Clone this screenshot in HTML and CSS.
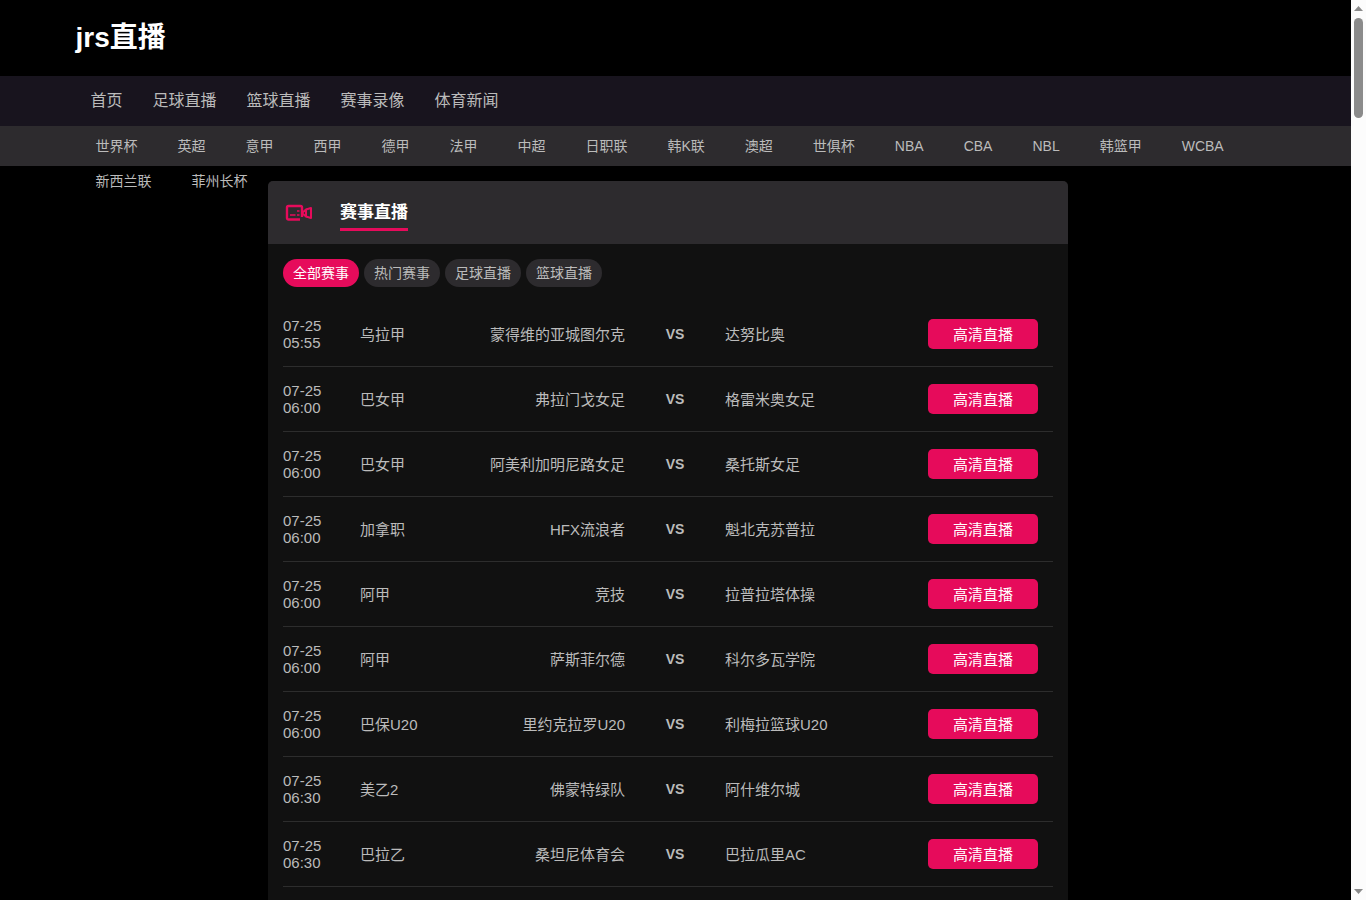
FILE: index.html
```
<!DOCTYPE html>
<html lang="zh-CN">
<head>
    <meta charset="UTF-8">
    <meta name="viewport" content="width=device-width, initial-scale=1.0">
    <title>jrs直播</title>
    <link rel="stylesheet" href="styles.css">
</head>
<body>
    <div class="page">
        <header class="header">
            <div class="container">
                <h1 class="logo">jrs直播</h1>
            </div>
        </header>
        <nav class="nav">
            <div class="container nav-list">
                <a href="#">首页</a>
                <a href="#">足球直播</a>
                <a href="#">篮球直播</a>
                <a href="#">赛事录像</a>
                <a href="#">体育新闻</a>
            </div>
        </nav>
        <nav class="subnav">
            <div class="container subnav-list">
                <a href="#">世界杯</a>
                <a href="#">英超</a>
                <a href="#">意甲</a>
                <a href="#">西甲</a>
                <a href="#">德甲</a>
                <a href="#">法甲</a>
                <a href="#">中超</a>
                <a href="#">日职联</a>
                <a href="#">韩K联</a>
                <a href="#">澳超</a>
                <a href="#">世俱杯</a>
                <a href="#">NBA</a>
                <a href="#">CBA</a>
                <a href="#">NBL</a>
                <a href="#">韩篮甲</a>
                <a href="#">WCBA</a>
                <a href="#">新西兰联</a>
                <a href="#">菲州长杯</a>
            </div>
        </nav>
        <main class="main">
            <section class="live">
                <div class="live-head">
                    <svg class="live-icon" viewBox="0 0 28 18" fill="none" stroke="currentColor" stroke-width="2.4" stroke-linejoin="round">
                        <path d="M15 15.500H3.500A1.500 1.500 0 0 1 2 14V3.500A1.500 1.500 0 0 1 3.500 2H15.500A1.500 1.500 0 0 1 17 3.500V13"/>
                        <path d="M17 9L21 5.500V12.500Z" stroke-width="2"/>
                        <path d="M21 5.500L26 4V14L21 12.500" stroke-width="2"/>
                        <path d="M5 11H10.500M12 11H14.500M12 7H14.500" stroke-width="1.600"/>
                    </svg>
                    <h2 class="live-title">赛事直播</h2>
                </div>
                <div class="tabs">
                    <button type="button" class="tab active">全部赛事</button>
                    <button type="button" class="tab">热门赛事</button>
                    <button type="button" class="tab">足球直播</button>
                    <button type="button" class="tab">篮球直播</button>
                </div>
                <table class="matches">
                    <colgroup>
                        <col class="col-time">
                        <col class="col-league">
                        <col>
                        <col class="col-vs">
                        <col>
                        <col class="col-link">
                    </colgroup>
                    <tbody>
                        <tr>
                            <td>07-25<br>05:55</td>
                            <td>乌拉甲</td>
                            <td class="home">蒙得维的亚城图尔克</td>
                            <td class="vs">VS</td>
                            <td>达努比奥</td>
                            <td><a class="watch" href="#">高清直播</a></td>
                        </tr>
                        <tr>
                            <td>07-25<br>06:00</td>
                            <td>巴女甲</td>
                            <td class="home">弗拉门戈女足</td>
                            <td class="vs">VS</td>
                            <td>格雷米奥女足</td>
                            <td><a class="watch" href="#">高清直播</a></td>
                        </tr>
                        <tr>
                            <td>07-25<br>06:00</td>
                            <td>巴女甲</td>
                            <td class="home">阿美利加明尼路女足</td>
                            <td class="vs">VS</td>
                            <td>桑托斯女足</td>
                            <td><a class="watch" href="#">高清直播</a></td>
                        </tr>
                        <tr>
                            <td>07-25<br>06:00</td>
                            <td>加拿职</td>
                            <td class="home">HFX流浪者</td>
                            <td class="vs">VS</td>
                            <td>魁北克苏普拉</td>
                            <td><a class="watch" href="#">高清直播</a></td>
                        </tr>
                        <tr>
                            <td>07-25<br>06:00</td>
                            <td>阿甲</td>
                            <td class="home">竞技</td>
                            <td class="vs">VS</td>
                            <td>拉普拉塔体操</td>
                            <td><a class="watch" href="#">高清直播</a></td>
                        </tr>
                        <tr>
                            <td>07-25<br>06:00</td>
                            <td>阿甲</td>
                            <td class="home">萨斯菲尔德</td>
                            <td class="vs">VS</td>
                            <td>科尔多瓦学院</td>
                            <td><a class="watch" href="#">高清直播</a></td>
                        </tr>
                        <tr>
                            <td>07-25<br>06:00</td>
                            <td>巴保U20</td>
                            <td class="home">里约克拉罗U20</td>
                            <td class="vs">VS</td>
                            <td>利梅拉篮球U20</td>
                            <td><a class="watch" href="#">高清直播</a></td>
                        </tr>
                        <tr>
                            <td>07-25<br>06:30</td>
                            <td>美乙2</td>
                            <td class="home">佛蒙特绿队</td>
                            <td class="vs">VS</td>
                            <td>阿什维尔城</td>
                            <td><a class="watch" href="#">高清直播</a></td>
                        </tr>
                        <tr>
                            <td>07-25<br>06:30</td>
                            <td>巴拉乙</td>
                            <td class="home">桑坦尼体育会</td>
                            <td class="vs">VS</td>
                            <td>巴拉瓜里AC</td>
                            <td><a class="watch" href="#">高清直播</a></td>
                        </tr>
                    </tbody>
                </table>
            </section>
        </main>
    </div>
    <div class="scrollbar" aria-hidden="true">
        <svg class="arrow" viewBox="0 0 9 5"><path d="M0 5L4.500 0L9 5Z"/></svg>
        <div class="track">
            <div class="thumb"></div>
        </div>
        <svg class="arrow" viewBox="0 0 9 5"><path d="M0 0L4.500 5L9 0Z"/></svg>
    </div>
</body>
</html>
```
FILE: styles.css
```
* {
    box-sizing: border-box;
}

body {
    display: flex;
    height: 100vh;
    margin: 0;
    background-color: #000;
    color: #bbb;
    font-family: "Liberation Sans", Arial, "Noto Sans CJK SC", sans-serif;
    font-size: 15px;
}

a {
    color: inherit;
    text-decoration: none;
}

.page {
    flex: 1;
    min-width: 0;
    overflow-y: auto;
    scrollbar-width: none;
}

.scrollbar {
    display: flex;
    flex-direction: column;
    align-items: center;
    width: 15px;
    padding: 6px 0;
    background-color: #fcfcfc;
}

.arrow {
    width: 9px;
    height: 5px;
    fill: #8b8b8b;
}

.track {
    flex: 1;
    padding-top: 7px;
}

.thumb {
    width: 9px;
    height: 100px;
    border-radius: 5px;
    background-color: #8b8b8b;
}

.container {
    max-width: 1200px;
    margin: 0 auto;
}

.logo {
    margin: 0;
    color: #fff;
    font-size: 28px;
    line-height: 76px;
}

.nav {
    background-color: #18141e;
}

.nav-list {
    display: flex;
    font-size: 16px;
    line-height: 50px;
}

.nav-list a {
    padding: 0 15px;
}

/* the league links wrap below the 40px bar */
.subnav {
    height: 40px;
    padding-top: 3px;
    background-color: #2d2b2e;
}

.subnav-list {
    display: flex;
    flex-wrap: wrap;
    font-size: 14px;
    line-height: 35px;
}

.subnav-list a {
    padding: 0 20px;
}

.main {
    padding: 15px 15px 0 0;
}

.live {
    max-width: 800px;
    min-height: 100vh;
    margin: 0 auto;
    background-color: #111;
    border-radius: 5px;
    overflow: hidden;
}

.live-head {
    display: flex;
    align-items: center;
    gap: 27px;
    height: 63px;
    padding: 0 17px;
    background-color: #2d2b2e;
}

.live-icon {
    width: 28px;
    height: 18px;
    color: #e60b5b;
}

.live-title {
    margin: 6px 0 0;
    padding-bottom: 2px;
    border-bottom: 3px solid #e60b5b;
    color: #fff;
    font-size: 17px;
    line-height: 26px;
}

.tabs {
    display: flex;
    gap: 5px;
    padding: 15px;
}

.tab {
    height: 28px;
    padding: 0 10px 2px;
    border: none;
    border-radius: 14px;
    background-color: #2d2b2e;
    color: #bbb;
    font-family: inherit;
    font-size: 14px;
    cursor: pointer;
}

.tab.active {
    background-color: #e60b5b;
    color: #fff;
}

.matches {
    width: calc(100% - 30px);
    margin: 0 15px;
    border-spacing: 0;
    table-layout: fixed;
}

.matches td {
    height: 65px;
    padding: 0;
    border-bottom: 1px solid #2d2d2d;
    line-height: 17px;
}

.col-time {
    width: 77px;
}

.col-league {
    width: 62px;
}

.col-vs {
    width: 100px;
}

.col-link {
    width: 125px;
}

.matches .home {
    text-align: right;
}

.matches .vs {
    font-size: 14px;
    font-weight: bold;
    text-align: center;
}

.watch {
    display: block;
    width: 110px;
    padding: 7px 0 6px;
    border-radius: 5px;
    background-color: #e60b5b;
    color: #fff;
    text-align: center;
}
```
